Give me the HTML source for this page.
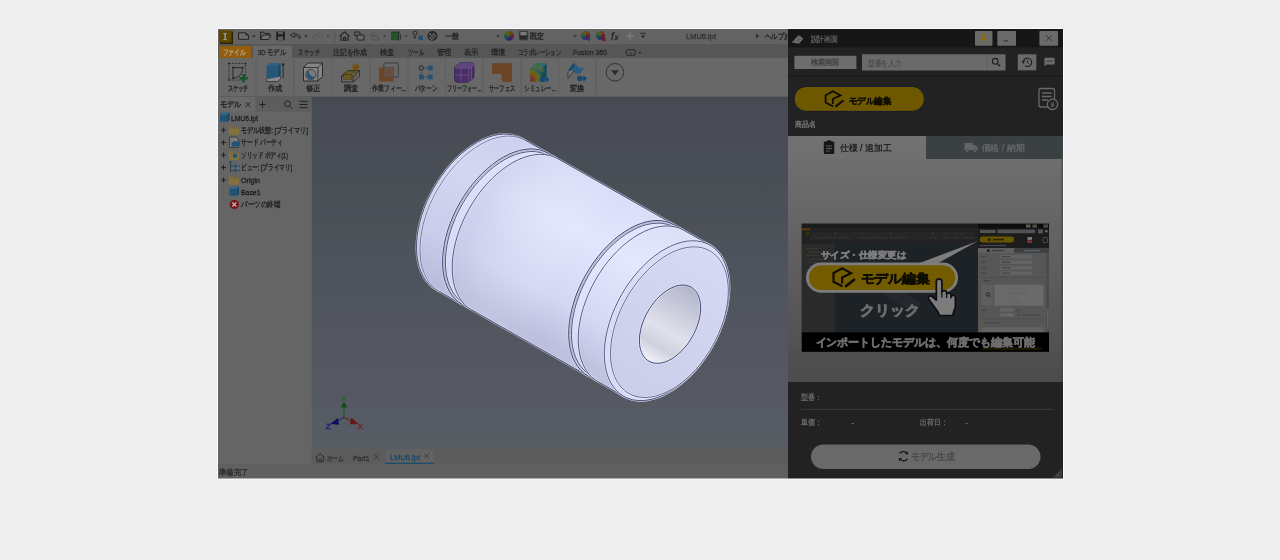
<!DOCTYPE html>
<html lang="ja"><head><meta charset="utf-8"><title>page</title>
<style>
html,body{margin:0;padding:0;background:#eeeeee;}
body{width:1280px;height:560px;overflow:hidden;position:relative;font-family:"Liberation Sans",sans-serif;}
svg{position:absolute;left:0;top:0;}
text{font-family:"Liberation Sans",sans-serif;}
</style></head><body>
<svg width="1280" height="560" viewBox="0 0 1280 560">
<defs>
<linearGradient id="vpg" x1="0" y1="0" x2="0" y2="1"><stop offset="0" stop-color="#464a52"/><stop offset="1" stop-color="#585c65"/></linearGradient>
<linearGradient id="cylg" gradientUnits="userSpaceOnUse" x1="530" y1="135" x2="446" y2="287"><stop offset="0" stop-color="#d8dbf7"/><stop offset="0.35" stop-color="#e3e6fd"/><stop offset="0.75" stop-color="#d4d7f3"/><stop offset="1" stop-color="#bcbfdd"/></linearGradient>
<linearGradient id="boreg" gradientUnits="userSpaceOnUse" x1="691" y1="288" x2="651" y2="360"><stop offset="0" stop-color="#b3b5cb"/><stop offset="0.3" stop-color="#c9cbdc"/><stop offset="0.6" stop-color="#e0e1ea"/><stop offset="0.82" stop-color="#cfd1df"/><stop offset="1" stop-color="#eeeff6"/></linearGradient>
<linearGradient id="faceg" gradientUnits="userSpaceOnUse" x1="710" y1="250" x2="630" y2="395"><stop offset="0" stop-color="#d6d9f4"/><stop offset="1" stop-color="#cbcee9"/></linearGradient>
<linearGradient id="cyla" gradientUnits="userSpaceOnUse" x1="479" y1="214" x2="667" y2="321"><stop offset="0" stop-color="#b8bbdc" stop-opacity="0.35"/><stop offset="0.5" stop-color="#ffffff" stop-opacity="0"/><stop offset="1" stop-color="#ffffff" stop-opacity="0.1"/></linearGradient>
<linearGradient id="rpg" x1="0" y1="0" x2="0" y2="1"><stop offset="0" stop-color="#727272"/><stop offset="1" stop-color="#4c4c4c"/></linearGradient>
<filter id="soft" filterUnits="userSpaceOnUse" x="200" y="10" width="880" height="490"><feGaussianBlur stdDeviation="0.5"/></filter>
<clipPath id="shotclip"><rect x="218" y="29" width="845" height="449.5"/></clipPath>
</defs>
<rect x="217" y="28" width="847" height="451.5" fill="#fafafa"/>
<g clip-path="url(#shotclip)">
<g id="shot" filter="url(#soft)">
<!-- base -->
<rect x="218" y="29" width="845" height="450" fill="#646464"/>
<!-- QAT / title -->
<rect x="218" y="29" width="570" height="15" fill="#636363"/>
<!-- tab row -->
<rect x="218" y="44" width="570" height="14" fill="#575757"/>
<!-- ribbon -->
<rect x="218" y="58" width="570" height="38" fill="#676767"/>
<!-- left panel -->
<rect x="218" y="96" width="93.7" height="368" fill="#656565"/>
<rect x="218" y="96" width="570" height="1" fill="#5c5c5c"/>
<!-- viewport -->
<rect x="311.7" y="97" width="476.3" height="352.3" fill="url(#vpg)"/>
<!-- doc tabs -->
<rect x="311.7" y="449.3" width="476.3" height="14.7" fill="#5b5b5b"/>
<!-- status -->
<rect x="218" y="464" width="570" height="15" fill="#606060"/>

<path d="M436.0 289.6 L432.2 287.1 L428.8 284.0 L425.7 280.4 L423.1 276.3 L420.9 271.7 L419.1 266.6 L417.8 261.2 L416.9 255.4 L416.5 249.3 L416.6 242.9 L417.2 236.3 L418.2 229.5 L419.7 222.6 L421.7 215.6 L424.0 208.7 L426.8 201.7 L430.0 194.9 L433.6 188.2 L437.5 181.7 L441.8 175.5 L446.3 169.5 L451.0 163.9 L456.0 158.7 L461.2 153.8 L466.5 149.5 L471.9 145.6 L477.3 142.3 L482.7 139.5 L488.2 137.2 L493.5 135.6 L498.8 134.5 L503.9 134.1 L508.8 134.3 L513.4 135.0 L517.9 136.4 L522.0 138.4 L709.8 245.0 L713.6 247.6 L717.0 250.7 L720.1 254.3 L722.7 258.4 L724.9 263.0 L726.7 268.1 L728.0 273.5 L728.9 279.3 L729.3 285.4 L729.2 291.8 L728.6 298.4 L727.6 305.2 L726.1 312.1 L724.2 319.0 L721.8 326.0 L719.0 332.9 L715.8 339.8 L712.2 346.5 L708.3 353.0 L704.0 359.2 L699.5 365.2 L694.8 370.8 L689.8 376.0 L684.6 380.8 L679.3 385.2 L674.0 389.1 L668.5 392.4 L663.1 395.2 L657.6 397.4 L652.3 399.1 L647.0 400.1 L642.0 400.6 L637.0 400.4 L632.4 399.7 L628.0 398.3 L623.8 396.3Z" fill="url(#cylg)"/>
<path d="M436.0 289.6 L432.2 287.1 L428.8 284.0 L425.7 280.4 L423.1 276.3 L420.9 271.7 L419.1 266.6 L417.8 261.2 L416.9 255.4 L416.5 249.3 L416.6 242.9 L417.2 236.3 L418.2 229.5 L419.7 222.6 L421.7 215.6 L424.0 208.7 L426.8 201.7 L430.0 194.9 L433.6 188.2 L437.5 181.7 L441.8 175.5 L446.3 169.5 L451.0 163.9 L456.0 158.7 L461.2 153.8 L466.5 149.5 L471.9 145.6 L477.3 142.3 L482.7 139.5 L488.2 137.2 L493.5 135.6 L498.8 134.5 L503.9 134.1 L508.8 134.3 L513.4 135.0 L517.9 136.4 L522.0 138.4 L709.8 245.0 L713.6 247.6 L717.0 250.7 L720.1 254.3 L722.7 258.4 L724.9 263.0 L726.7 268.1 L728.0 273.5 L728.9 279.3 L729.3 285.4 L729.2 291.8 L728.6 298.4 L727.6 305.2 L726.1 312.1 L724.2 319.0 L721.8 326.0 L719.0 332.9 L715.8 339.8 L712.2 346.5 L708.3 353.0 L704.0 359.2 L699.5 365.2 L694.8 370.8 L689.8 376.0 L684.6 380.8 L679.3 385.2 L674.0 389.1 L668.5 392.4 L663.1 395.2 L657.6 397.4 L652.3 399.1 L647.0 400.1 L642.0 400.6 L637.0 400.4 L632.4 399.7 L628.0 398.3 L623.8 396.3Z" fill="url(#cyla)"/>
<path d="M436.0 289.6 L432.2 287.1 L428.8 284.0 L425.7 280.4 L423.1 276.3 L420.9 271.7 L419.1 266.6 L417.8 261.2 L416.9 255.4 L416.5 249.3 L416.6 242.9 L417.2 236.3 L418.2 229.5 L419.7 222.6 L421.7 215.6 L424.0 208.7 L426.8 201.7 L430.0 194.9 L433.6 188.2 L437.5 181.7 L441.8 175.5 L446.3 169.5 L451.0 163.9 L456.0 158.7 L461.2 153.8 L466.5 149.5 L471.9 145.6 L477.3 142.3 L482.7 139.5 L488.2 137.2 L493.5 135.6 L498.8 134.5 L503.9 134.1 L508.8 134.3 L513.4 135.0 L517.9 136.4 L522.0 138.4 L709.8 245.0 L713.6 247.6 L717.0 250.7 L720.1 254.3 L722.7 258.4 L724.9 263.0 L726.7 268.1 L728.0 273.5 L728.9 279.3 L729.3 285.4 L729.2 291.8 L728.6 298.4 L727.6 305.2 L726.1 312.1 L724.2 319.0 L721.8 326.0 L719.0 332.9 L715.8 339.8 L712.2 346.5 L708.3 353.0 L704.0 359.2 L699.5 365.2 L694.8 370.8 L689.8 376.0 L684.6 380.8 L679.3 385.2 L674.0 389.1 L668.5 392.4 L663.1 395.2 L657.6 397.4 L652.3 399.1 L647.0 400.1 L642.0 400.6 L637.0 400.4 L632.4 399.7 L628.0 398.3 L623.8 396.3Z" fill="none" stroke="#f6f7ff" stroke-width="2.1" stroke-opacity="0.55"/><path d="M436.0 289.6 L432.2 287.1 L428.8 284.0 L425.7 280.4 L423.1 276.3 L420.9 271.7 L419.1 266.6 L417.8 261.2 L416.9 255.4 L416.5 249.3 L416.6 242.9 L417.2 236.3 L418.2 229.5 L419.7 222.6 L421.7 215.6 L424.0 208.7 L426.8 201.7 L430.0 194.9 L433.6 188.2 L437.5 181.7 L441.8 175.5 L446.3 169.5 L451.0 163.9 L456.0 158.7 L461.2 153.8 L466.5 149.5 L471.9 145.6 L477.3 142.3 L482.7 139.5 L488.2 137.2 L493.5 135.6 L498.8 134.5 L503.9 134.1 L508.8 134.3 L513.4 135.0 L517.9 136.4 L522.0 138.4 L709.8 245.0 L713.6 247.6 L717.0 250.7 L720.1 254.3 L722.7 258.4 L724.9 263.0 L726.7 268.1 L728.0 273.5 L728.9 279.3 L729.3 285.4 L729.2 291.8 L728.6 298.4 L727.6 305.2 L726.1 312.1 L724.2 319.0 L721.8 326.0 L719.0 332.9 L715.8 339.8 L712.2 346.5 L708.3 353.0 L704.0 359.2 L699.5 365.2 L694.8 370.8 L689.8 376.0 L684.6 380.8 L679.3 385.2 L674.0 389.1 L668.5 392.4 L663.1 395.2 L657.6 397.4 L652.3 399.1 L647.0 400.1 L642.0 400.6 L637.0 400.4 L632.4 399.7 L628.0 398.3 L623.8 396.3Z" fill="none" stroke="#2e3368" stroke-width="0.8"/>
<path d="M439.5 291.6 L435.7 289.1 L432.3 286.0 L429.2 282.4 L426.6 278.2 L424.3 273.6 L422.6 268.6 L421.2 263.2 L420.4 257.4 L420.0 251.2 L420.1 244.8 L420.7 238.2 L421.7 231.5 L423.2 224.6 L425.1 217.6 L427.5 210.6 L430.3 203.7 L433.5 196.9 L437.1 190.2 L441.0 183.7 L445.2 177.4 L449.8 171.5 L454.5 165.9 L459.5 160.6 L464.7 155.8 L469.9 151.5 L475.3 147.6 L480.8 144.3 L486.2 141.5 L491.6 139.2 L497.0 137.6 L502.2 136.5 L507.3 136.1 L512.2 136.2 L516.9 137.0 L521.3 138.4 L525.5 140.3" fill="none" stroke="#f6f7ff" stroke-width="1.9" stroke-opacity="0.55"/><path d="M439.5 291.6 L435.7 289.1 L432.3 286.0 L429.2 282.4 L426.6 278.2 L424.3 273.6 L422.6 268.6 L421.2 263.2 L420.4 257.4 L420.0 251.2 L420.1 244.8 L420.7 238.2 L421.7 231.5 L423.2 224.6 L425.1 217.6 L427.5 210.6 L430.3 203.7 L433.5 196.9 L437.1 190.2 L441.0 183.7 L445.2 177.4 L449.8 171.5 L454.5 165.9 L459.5 160.6 L464.7 155.8 L469.9 151.5 L475.3 147.6 L480.8 144.3 L486.2 141.5 L491.6 139.2 L497.0 137.6 L502.2 136.5 L507.3 136.1 L512.2 136.2 L516.9 137.0 L521.3 138.4 L525.5 140.3" fill="none" stroke="#2e3368" stroke-width="0.6"/>
<path d="M462.1 304.5 L458.3 301.9 L454.9 298.8 L451.8 295.2 L449.2 291.1 L447.0 286.5 L445.2 281.4 L443.9 276.0 L443.0 270.2 L442.6 264.1 L442.7 257.7 L443.3 251.1 L444.3 244.3 L445.8 237.4 L447.7 230.5 L450.1 223.5 L452.9 216.6 L456.1 209.7 L459.7 203.0 L463.6 196.5 L467.8 190.3 L472.4 184.3 L477.1 178.7 L482.1 173.5 L487.3 168.7 L492.6 164.3 L497.9 160.4 L503.4 157.1 L508.8 154.3 L514.3 152.1 L519.6 150.4 L524.8 149.4 L529.9 148.9 L534.8 149.1 L539.5 149.8 L543.9 151.2 L548.1 153.2 L548.5 155.7 L544.4 153.8 L540.1 152.4 L535.6 151.7 L530.8 151.5 L525.8 152.0 L520.7 153.0 L515.4 154.6 L510.1 156.8 L504.8 159.5 L499.5 162.8 L494.2 166.6 L489.1 170.8 L484.0 175.5 L479.2 180.7 L474.5 186.1 L470.1 192.0 L466.0 198.1 L462.1 204.4 L458.6 211.0 L455.5 217.6 L452.8 224.4 L450.4 231.2 L448.5 238.0 L447.1 244.7 L446.1 251.4 L445.5 257.8 L445.4 264.1 L445.8 270.0 L446.6 275.7 L447.9 281.0 L449.7 285.9 L451.9 290.4 L454.4 294.5 L457.4 298.0 L460.8 301.0 L464.5 303.5Z" fill="#a9acc9"/>
<path d="M464.5 303.5 L460.8 301.0 L457.4 298.0 L454.4 294.5 L451.9 290.4 L449.7 285.9 L447.9 281.0 L446.6 275.7 L445.8 270.0 L445.4 264.1 L445.5 257.8 L446.1 251.4 L447.1 244.7 L448.5 238.0 L450.4 231.2 L452.8 224.4 L455.5 217.6 L458.6 211.0 L462.1 204.4 L466.0 198.1 L470.1 192.0 L474.5 186.1 L479.2 180.7 L484.0 175.5 L489.1 170.8 L494.2 166.6 L499.5 162.8 L504.8 159.5 L510.1 156.8 L515.4 154.6 L520.7 153.0 L525.8 152.0 L530.8 151.5 L535.6 151.7 L540.1 152.4 L544.4 153.8 L548.5 155.7 L557.6 158.6 L553.5 156.6 L549.1 155.3 L544.4 154.5 L539.5 154.3 L534.4 154.8 L529.2 155.8 L523.8 157.5 L518.4 159.7 L512.9 162.5 L507.5 165.9 L502.1 169.7 L496.8 174.1 L491.7 178.9 L486.7 184.2 L481.9 189.8 L477.4 195.7 L473.2 202.0 L469.3 208.5 L465.7 215.2 L462.5 222.0 L459.7 228.9 L457.3 235.9 L455.4 242.9 L453.9 249.7 L452.8 256.5 L452.3 263.1 L452.2 269.5 L452.6 275.6 L453.4 281.4 L454.7 286.9 L456.5 291.9 L458.7 296.5 L461.4 300.6 L464.4 304.3 L467.9 307.4 L471.7 309.9Z" fill="#e3e6fd" fill-opacity="0.6"/>
<path d="M462.1 304.5 L458.3 301.9 L454.9 298.8 L451.8 295.2 L449.2 291.1 L447.0 286.5 L445.2 281.4 L443.9 276.0 L443.0 270.2 L442.6 264.1 L442.7 257.7 L443.3 251.1 L444.3 244.3 L445.8 237.4 L447.7 230.5 L450.1 223.5 L452.9 216.6 L456.1 209.7 L459.7 203.0 L463.6 196.5 L467.8 190.3 L472.4 184.3 L477.1 178.7 L482.1 173.5 L487.3 168.7 L492.6 164.3 L497.9 160.4 L503.4 157.1 L508.8 154.3 L514.3 152.1 L519.6 150.4 L524.8 149.4 L529.9 148.9 L534.8 149.1 L539.5 149.8 L543.9 151.2 L548.1 153.2" fill="none" stroke="#f6f7ff" stroke-width="2.2" stroke-opacity="0.55"/><path d="M462.1 304.5 L458.3 301.9 L454.9 298.8 L451.8 295.2 L449.2 291.1 L447.0 286.5 L445.2 281.4 L443.9 276.0 L443.0 270.2 L442.6 264.1 L442.7 257.7 L443.3 251.1 L444.3 244.3 L445.8 237.4 L447.7 230.5 L450.1 223.5 L452.9 216.6 L456.1 209.7 L459.7 203.0 L463.6 196.5 L467.8 190.3 L472.4 184.3 L477.1 178.7 L482.1 173.5 L487.3 168.7 L492.6 164.3 L497.9 160.4 L503.4 157.1 L508.8 154.3 L514.3 152.1 L519.6 150.4 L524.8 149.4 L529.9 148.9 L534.8 149.1 L539.5 149.8 L543.9 151.2 L548.1 153.2" fill="none" stroke="#2e3368" stroke-width="0.9"/>
<path d="M464.5 303.5 L460.8 301.0 L457.4 298.0 L454.4 294.5 L451.9 290.4 L449.7 285.9 L447.9 281.0 L446.6 275.7 L445.8 270.0 L445.4 264.1 L445.5 257.8 L446.1 251.4 L447.1 244.7 L448.5 238.0 L450.4 231.2 L452.8 224.4 L455.5 217.6 L458.6 211.0 L462.1 204.4 L466.0 198.1 L470.1 192.0 L474.5 186.1 L479.2 180.7 L484.0 175.5 L489.1 170.8 L494.2 166.6 L499.5 162.8 L504.8 159.5 L510.1 156.8 L515.4 154.6 L520.7 153.0 L525.8 152.0 L530.8 151.5 L535.6 151.7 L540.1 152.4 L544.4 153.8 L548.5 155.7" fill="none" stroke="#f6f7ff" stroke-width="2.1" stroke-opacity="0.55"/><path d="M464.5 303.5 L460.8 301.0 L457.4 298.0 L454.4 294.5 L451.9 290.4 L449.7 285.9 L447.9 281.0 L446.6 275.7 L445.8 270.0 L445.4 264.1 L445.5 257.8 L446.1 251.4 L447.1 244.7 L448.5 238.0 L450.4 231.2 L452.8 224.4 L455.5 217.6 L458.6 211.0 L462.1 204.4 L466.0 198.1 L470.1 192.0 L474.5 186.1 L479.2 180.7 L484.0 175.5 L489.1 170.8 L494.2 166.6 L499.5 162.8 L504.8 159.5 L510.1 156.8 L515.4 154.6 L520.7 153.0 L525.8 152.0 L530.8 151.5 L535.6 151.7 L540.1 152.4 L544.4 153.8 L548.5 155.7" fill="none" stroke="#2e3368" stroke-width="0.8"/>
<path d="M471.7 309.9 L467.9 307.4 L464.4 304.3 L461.4 300.6 L458.7 296.5 L456.5 291.9 L454.7 286.9 L453.4 281.4 L452.6 275.6 L452.2 269.5 L452.3 263.1 L452.8 256.5 L453.9 249.7 L455.4 242.9 L457.3 235.9 L459.7 228.9 L462.5 222.0 L465.7 215.2 L469.3 208.5 L473.2 202.0 L477.4 195.7 L481.9 189.8 L486.7 184.2 L491.7 178.9 L496.8 174.1 L502.1 169.7 L507.5 165.9 L512.9 162.5 L518.4 159.7 L523.8 157.5 L529.2 155.8 L534.4 154.8 L539.5 154.3 L544.4 154.5 L549.1 155.3 L553.5 156.6 L557.6 158.6" fill="none" stroke="#f6f7ff" stroke-width="2.1" stroke-opacity="0.55"/><path d="M471.7 309.9 L467.9 307.4 L464.4 304.3 L461.4 300.6 L458.7 296.5 L456.5 291.9 L454.7 286.9 L453.4 281.4 L452.6 275.6 L452.2 269.5 L452.3 263.1 L452.8 256.5 L453.9 249.7 L455.4 242.9 L457.3 235.9 L459.7 228.9 L462.5 222.0 L465.7 215.2 L469.3 208.5 L473.2 202.0 L477.4 195.7 L481.9 189.8 L486.7 184.2 L491.7 178.9 L496.8 174.1 L502.1 169.7 L507.5 165.9 L512.9 162.5 L518.4 159.7 L523.8 157.5 L529.2 155.8 L534.4 154.8 L539.5 154.3 L544.4 154.5 L549.1 155.3 L553.5 156.6 L557.6 158.6" fill="none" stroke="#2e3368" stroke-width="0.8"/>
<path d="M588.2 376.1 L584.4 373.6 L581.0 370.5 L577.9 366.8 L575.3 362.7 L573.0 358.1 L571.3 353.1 L569.9 347.6 L569.1 341.8 L568.7 335.7 L568.8 329.3 L569.3 322.7 L570.4 315.9 L571.9 309.0 L573.8 302.1 L576.2 295.1 L579.0 288.2 L582.2 281.3 L585.8 274.7 L589.7 268.2 L593.9 261.9 L598.4 256.0 L603.2 250.3 L608.2 245.1 L613.3 240.3 L618.6 235.9 L624.0 232.1 L629.5 228.7 L634.9 225.9 L640.3 223.7 L645.7 222.0 L650.9 221.0 L656.0 220.5 L660.9 220.7 L665.6 221.5 L670.0 222.8 L674.1 224.8 L674.5 227.3 L670.5 225.4 L666.2 224.1 L661.6 223.3 L656.8 223.2 L651.9 223.6 L646.7 224.6 L641.5 226.2 L636.2 228.4 L630.9 231.2 L625.6 234.4 L620.3 238.2 L615.1 242.5 L610.1 247.2 L605.2 252.3 L600.6 257.8 L596.2 263.6 L592.0 269.7 L588.2 276.0 L584.7 282.6 L581.6 289.3 L578.9 296.0 L576.5 302.8 L574.6 309.6 L573.2 316.4 L572.1 323.0 L571.6 329.4 L571.5 335.7 L571.9 341.7 L572.7 347.3 L574.0 352.6 L575.8 357.6 L577.9 362.1 L580.5 366.1 L583.5 369.6 L586.9 372.7 L590.6 375.1Z" fill="#a9acc9"/>
<path d="M590.6 375.1 L586.9 372.7 L583.5 369.6 L580.5 366.1 L577.9 362.1 L575.8 357.6 L574.0 352.6 L572.7 347.3 L571.9 341.7 L571.5 335.7 L571.6 329.4 L572.1 323.0 L573.2 316.4 L574.6 309.6 L576.5 302.8 L578.9 296.0 L581.6 289.3 L584.7 282.6 L588.2 276.0 L592.0 269.7 L596.2 263.6 L600.6 257.8 L605.2 252.3 L610.1 247.2 L615.1 242.5 L620.3 238.2 L625.6 234.4 L630.9 231.2 L636.2 228.4 L641.5 226.2 L646.7 224.6 L651.9 223.6 L656.8 223.2 L661.6 223.3 L666.2 224.1 L670.5 225.4 L674.5 227.3 L683.7 230.2 L679.6 228.3 L675.2 226.9 L670.5 226.1 L665.6 226.0 L660.5 226.4 L655.2 227.5 L649.9 229.1 L644.5 231.4 L639.0 234.2 L633.6 237.5 L628.2 241.4 L622.9 245.7 L617.8 250.5 L612.8 255.8 L608.0 261.4 L603.5 267.3 L599.3 273.6 L595.3 280.1 L591.8 286.8 L588.6 293.6 L585.8 300.5 L583.4 307.5 L581.4 314.5 L579.9 321.4 L578.9 328.1 L578.3 334.7 L578.2 341.1 L578.6 347.2 L579.5 353.0 L580.8 358.5 L582.6 363.5 L584.8 368.1 L587.5 372.3 L590.5 375.9 L594.0 379.0 L597.8 381.5Z" fill="#e3e6fd" fill-opacity="0.6"/>
<path d="M588.2 376.1 L584.4 373.6 L581.0 370.5 L577.9 366.8 L575.3 362.7 L573.0 358.1 L571.3 353.1 L569.9 347.6 L569.1 341.8 L568.7 335.7 L568.8 329.3 L569.3 322.7 L570.4 315.9 L571.9 309.0 L573.8 302.1 L576.2 295.1 L579.0 288.2 L582.2 281.3 L585.8 274.7 L589.7 268.2 L593.9 261.9 L598.4 256.0 L603.2 250.3 L608.2 245.1 L613.3 240.3 L618.6 235.9 L624.0 232.1 L629.5 228.7 L634.9 225.9 L640.3 223.7 L645.7 222.0 L650.9 221.0 L656.0 220.5 L660.9 220.7 L665.6 221.5 L670.0 222.8 L674.1 224.8" fill="none" stroke="#f6f7ff" stroke-width="2.2" stroke-opacity="0.55"/><path d="M588.2 376.1 L584.4 373.6 L581.0 370.5 L577.9 366.8 L575.3 362.7 L573.0 358.1 L571.3 353.1 L569.9 347.6 L569.1 341.8 L568.7 335.7 L568.8 329.3 L569.3 322.7 L570.4 315.9 L571.9 309.0 L573.8 302.1 L576.2 295.1 L579.0 288.2 L582.2 281.3 L585.8 274.7 L589.7 268.2 L593.9 261.9 L598.4 256.0 L603.2 250.3 L608.2 245.1 L613.3 240.3 L618.6 235.9 L624.0 232.1 L629.5 228.7 L634.9 225.9 L640.3 223.7 L645.7 222.0 L650.9 221.0 L656.0 220.5 L660.9 220.7 L665.6 221.5 L670.0 222.8 L674.1 224.8" fill="none" stroke="#2e3368" stroke-width="0.9"/>
<path d="M590.6 375.1 L586.9 372.7 L583.5 369.6 L580.5 366.1 L577.9 362.1 L575.8 357.6 L574.0 352.6 L572.7 347.3 L571.9 341.7 L571.5 335.7 L571.6 329.4 L572.1 323.0 L573.2 316.4 L574.6 309.6 L576.5 302.8 L578.9 296.0 L581.6 289.3 L584.7 282.6 L588.2 276.0 L592.0 269.7 L596.2 263.6 L600.6 257.8 L605.2 252.3 L610.1 247.2 L615.1 242.5 L620.3 238.2 L625.6 234.4 L630.9 231.2 L636.2 228.4 L641.5 226.2 L646.7 224.6 L651.9 223.6 L656.8 223.2 L661.6 223.3 L666.2 224.1 L670.5 225.4 L674.5 227.3" fill="none" stroke="#f6f7ff" stroke-width="2.1" stroke-opacity="0.55"/><path d="M590.6 375.1 L586.9 372.7 L583.5 369.6 L580.5 366.1 L577.9 362.1 L575.8 357.6 L574.0 352.6 L572.7 347.3 L571.9 341.7 L571.5 335.7 L571.6 329.4 L572.1 323.0 L573.2 316.4 L574.6 309.6 L576.5 302.8 L578.9 296.0 L581.6 289.3 L584.7 282.6 L588.2 276.0 L592.0 269.7 L596.2 263.6 L600.6 257.8 L605.2 252.3 L610.1 247.2 L615.1 242.5 L620.3 238.2 L625.6 234.4 L630.9 231.2 L636.2 228.4 L641.5 226.2 L646.7 224.6 L651.9 223.6 L656.8 223.2 L661.6 223.3 L666.2 224.1 L670.5 225.4 L674.5 227.3" fill="none" stroke="#2e3368" stroke-width="0.8"/>
<path d="M597.8 381.5 L594.0 379.0 L590.5 375.9 L587.5 372.3 L584.8 368.1 L582.6 363.5 L580.8 358.5 L579.5 353.0 L578.6 347.2 L578.2 341.1 L578.3 334.7 L578.9 328.1 L579.9 321.4 L581.4 314.5 L583.4 307.5 L585.8 300.5 L588.6 293.6 L591.8 286.8 L595.3 280.1 L599.3 273.6 L603.5 267.3 L608.0 261.4 L612.8 255.8 L617.8 250.5 L622.9 245.7 L628.2 241.4 L633.6 237.5 L639.0 234.2 L644.5 231.4 L649.9 229.1 L655.2 227.5 L660.5 226.4 L665.6 226.0 L670.5 226.1 L675.2 226.9 L679.6 228.3 L683.7 230.2" fill="none" stroke="#f6f7ff" stroke-width="2.1" stroke-opacity="0.55"/><path d="M597.8 381.5 L594.0 379.0 L590.5 375.9 L587.5 372.3 L584.8 368.1 L582.6 363.5 L580.8 358.5 L579.5 353.0 L578.6 347.2 L578.2 341.1 L578.3 334.7 L578.9 328.1 L579.9 321.4 L581.4 314.5 L583.4 307.5 L585.8 300.5 L588.6 293.6 L591.8 286.8 L595.3 280.1 L599.3 273.6 L603.5 267.3 L608.0 261.4 L612.8 255.8 L617.8 250.5 L622.9 245.7 L628.2 241.4 L633.6 237.5 L639.0 234.2 L644.5 231.4 L649.9 229.1 L655.2 227.5 L660.5 226.4 L665.6 226.0 L670.5 226.1 L675.2 226.9 L679.6 228.3 L683.7 230.2" fill="none" stroke="#2e3368" stroke-width="0.8"/>
<path d="M712.2 346.5 L708.3 353.0 L704.0 359.2 L699.5 365.2 L694.8 370.8 L689.8 376.0 L684.6 380.8 L679.3 385.2 L674.0 389.1 L668.5 392.4 L663.1 395.2 L657.6 397.4 L652.3 399.1 L647.0 400.1 L642.0 400.6 L637.0 400.4 L632.4 399.7 L628.0 398.3 L623.8 396.3 L620.0 393.8 L616.6 390.7 L613.6 387.1 L610.9 383.0 L608.7 378.4 L606.9 373.3 L605.6 367.9 L604.7 362.1 L604.3 355.9 L604.4 349.6 L605.0 343.0 L606.0 336.2 L607.5 329.3 L609.5 322.3 L611.8 315.4 L614.7 308.4 L617.9 301.6 L621.4 294.9 L625.3 288.4 L629.6 282.2 L634.1 276.2 L638.9 270.6 L643.8 265.4 L649.0 260.5 L654.3 256.2 L659.7 252.3 L665.1 249.0 L670.6 246.2 L676.0 243.9 L681.3 242.3 L686.6 241.2 L691.7 240.8 L696.6 240.9 L701.2 241.7 L705.7 243.1 L709.8 245.0 L713.6 247.6 L717.0 250.7 L720.1 254.3 L722.7 258.4 L724.9 263.0 L726.7 268.1 L728.0 273.5 L728.9 279.3 L729.3 285.4 L729.2 291.8 L728.6 298.4 L727.6 305.2 L726.1 312.1 L724.2 319.0 L721.8 326.0 L719.0 332.9 L715.8 339.8 L712.2 346.5Z" fill="#d9dcf7"/>
<path d="M712.2 346.5 L708.3 353.0 L704.0 359.2 L699.5 365.2 L694.8 370.8 L689.8 376.0 L684.6 380.8 L679.3 385.2 L674.0 389.1 L668.5 392.4 L663.1 395.2 L657.6 397.4 L652.3 399.1 L647.0 400.1 L642.0 400.6 L637.0 400.4 L632.4 399.7 L628.0 398.3 L623.8 396.3 L620.0 393.8 L616.6 390.7 L613.6 387.1 L610.9 383.0 L608.7 378.4 L606.9 373.3 L605.6 367.9 L604.7 362.1 L604.3 355.9 L604.4 349.6 L605.0 343.0 L606.0 336.2 L607.5 329.3 L609.5 322.3 L611.8 315.4 L614.7 308.4 L617.9 301.6 L621.4 294.9 L625.3 288.4 L629.6 282.2 L634.1 276.2 L638.9 270.6 L643.8 265.4 L649.0 260.5 L654.3 256.2 L659.7 252.3 L665.1 249.0 L670.6 246.2 L676.0 243.9 L681.3 242.3 L686.6 241.2 L691.7 240.8 L696.6 240.9 L701.2 241.7 L705.7 243.1 L709.8 245.0 L713.6 247.6 L717.0 250.7 L720.1 254.3 L722.7 258.4 L724.9 263.0 L726.7 268.1 L728.0 273.5 L728.9 279.3 L729.3 285.4 L729.2 291.8 L728.6 298.4 L727.6 305.2 L726.1 312.1 L724.2 319.0 L721.8 326.0 L719.0 332.9 L715.8 339.8 L712.2 346.5Z" fill="none" stroke="#f6f7ff" stroke-width="2.1" stroke-opacity="0.55"/><path d="M712.2 346.5 L708.3 353.0 L704.0 359.2 L699.5 365.2 L694.8 370.8 L689.8 376.0 L684.6 380.8 L679.3 385.2 L674.0 389.1 L668.5 392.4 L663.1 395.2 L657.6 397.4 L652.3 399.1 L647.0 400.1 L642.0 400.6 L637.0 400.4 L632.4 399.7 L628.0 398.3 L623.8 396.3 L620.0 393.8 L616.6 390.7 L613.6 387.1 L610.9 383.0 L608.7 378.4 L606.9 373.3 L605.6 367.9 L604.7 362.1 L604.3 355.9 L604.4 349.6 L605.0 343.0 L606.0 336.2 L607.5 329.3 L609.5 322.3 L611.8 315.4 L614.7 308.4 L617.9 301.6 L621.4 294.9 L625.3 288.4 L629.6 282.2 L634.1 276.2 L638.9 270.6 L643.8 265.4 L649.0 260.5 L654.3 256.2 L659.7 252.3 L665.1 249.0 L670.6 246.2 L676.0 243.9 L681.3 242.3 L686.6 241.2 L691.7 240.8 L696.6 240.9 L701.2 241.7 L705.7 243.1 L709.8 245.0 L713.6 247.6 L717.0 250.7 L720.1 254.3 L722.7 258.4 L724.9 263.0 L726.7 268.1 L728.0 273.5 L728.9 279.3 L729.3 285.4 L729.2 291.8 L728.6 298.4 L727.6 305.2 L726.1 312.1 L724.2 319.0 L721.8 326.0 L719.0 332.9 L715.8 339.8 L712.2 346.5Z" fill="none" stroke="#2e3368" stroke-width="0.8"/>
<path d="M712.2 346.5 L708.5 352.6 L704.5 358.5 L700.3 364.1 L695.8 369.4 L691.1 374.3 L686.2 378.9 L681.2 383.0 L676.2 386.6 L671.0 389.8 L665.9 392.4 L660.8 394.5 L655.7 396.1 L650.8 397.1 L646.0 397.5 L641.4 397.3 L637.0 396.6 L632.8 395.3 L628.9 393.5 L625.3 391.1 L622.1 388.2 L619.2 384.8 L616.7 380.9 L614.6 376.5 L613.0 371.8 L611.7 366.6 L610.9 361.2 L610.5 355.4 L610.6 349.4 L611.1 343.2 L612.1 336.8 L613.5 330.3 L615.4 323.7 L617.6 317.2 L620.3 310.6 L623.3 304.2 L626.6 297.9 L630.3 291.7 L634.3 285.9 L638.6 280.2 L643.1 275.0 L647.8 270.0 L652.6 265.5 L657.6 261.4 L662.7 257.7 L667.8 254.6 L672.9 251.9 L678.1 249.8 L683.1 248.3 L688.0 247.3 L692.8 246.9 L697.5 247.0 L701.9 247.7 L706.0 249.0 L709.9 250.9 L713.5 253.3 L716.7 256.2 L719.6 259.6 L722.1 263.5 L724.2 267.8 L725.9 272.6 L727.1 277.7 L727.9 283.2 L728.3 288.9 L728.2 295.0 L727.7 301.2 L726.7 307.6 L725.3 314.1 L723.5 320.6 L721.2 327.2 L718.6 333.7 L715.6 340.2 L712.2 346.5Z" fill="url(#faceg)"/>
<path d="M712.2 346.5 L708.5 352.6 L704.5 358.5 L700.3 364.1 L695.8 369.4 L691.1 374.3 L686.2 378.9 L681.2 383.0 L676.2 386.6 L671.0 389.8 L665.9 392.4 L660.8 394.5 L655.7 396.1 L650.8 397.1 L646.0 397.5 L641.4 397.3 L637.0 396.6 L632.8 395.3 L628.9 393.5 L625.3 391.1 L622.1 388.2 L619.2 384.8 L616.7 380.9 L614.6 376.5 L613.0 371.8 L611.7 366.6 L610.9 361.2 L610.5 355.4 L610.6 349.4 L611.1 343.2 L612.1 336.8 L613.5 330.3 L615.4 323.7 L617.6 317.2 L620.3 310.6 L623.3 304.2 L626.6 297.9 L630.3 291.7 L634.3 285.9 L638.6 280.2 L643.1 275.0 L647.8 270.0 L652.6 265.5 L657.6 261.4 L662.7 257.7 L667.8 254.6 L672.9 251.9 L678.1 249.8 L683.1 248.3 L688.0 247.3 L692.8 246.9 L697.5 247.0 L701.9 247.7 L706.0 249.0 L709.9 250.9 L713.5 253.3 L716.7 256.2 L719.6 259.6 L722.1 263.5 L724.2 267.8 L725.9 272.6 L727.1 277.7 L727.9 283.2 L728.3 288.9 L728.2 295.0 L727.7 301.2 L726.7 307.6 L725.3 314.1 L723.5 320.6 L721.2 327.2 L718.6 333.7 L715.6 340.2 L712.2 346.5Z" fill="none" stroke="#f6f7ff" stroke-width="2.0" stroke-opacity="0.55"/><path d="M712.2 346.5 L708.5 352.6 L704.5 358.5 L700.3 364.1 L695.8 369.4 L691.1 374.3 L686.2 378.9 L681.2 383.0 L676.2 386.6 L671.0 389.8 L665.9 392.4 L660.8 394.5 L655.7 396.1 L650.8 397.1 L646.0 397.5 L641.4 397.3 L637.0 396.6 L632.8 395.3 L628.9 393.5 L625.3 391.1 L622.1 388.2 L619.2 384.8 L616.7 380.9 L614.6 376.5 L613.0 371.8 L611.7 366.6 L610.9 361.2 L610.5 355.4 L610.6 349.4 L611.1 343.2 L612.1 336.8 L613.5 330.3 L615.4 323.7 L617.6 317.2 L620.3 310.6 L623.3 304.2 L626.6 297.9 L630.3 291.7 L634.3 285.9 L638.6 280.2 L643.1 275.0 L647.8 270.0 L652.6 265.5 L657.6 261.4 L662.7 257.7 L667.8 254.6 L672.9 251.9 L678.1 249.8 L683.1 248.3 L688.0 247.3 L692.8 246.9 L697.5 247.0 L701.9 247.7 L706.0 249.0 L709.9 250.9 L713.5 253.3 L716.7 256.2 L719.6 259.6 L722.1 263.5 L724.2 267.8 L725.9 272.6 L727.1 277.7 L727.9 283.2 L728.3 288.9 L728.2 295.0 L727.7 301.2 L726.7 307.6 L725.3 314.1 L723.5 320.6 L721.2 327.2 L718.6 333.7 L715.6 340.2 L712.2 346.5Z" fill="none" stroke="#2e3368" stroke-width="0.7"/>
<path d="M692.2 336.8 L690.3 340.0 L688.3 343.0 L686.0 346.0 L683.7 348.7 L681.3 351.3 L678.7 353.6 L676.2 355.8 L673.5 357.7 L670.9 359.3 L668.2 360.7 L665.5 361.8 L662.9 362.6 L660.3 363.1 L657.8 363.3 L655.4 363.2 L653.2 362.8 L651.0 362.2 L649.0 361.2 L647.1 360.0 L645.4 358.5 L643.9 356.7 L642.6 354.7 L641.6 352.4 L640.7 349.9 L640.0 347.3 L639.6 344.4 L639.4 341.4 L639.5 338.3 L639.7 335.1 L640.3 331.8 L641.0 328.4 L641.9 325.0 L643.1 321.6 L644.5 318.2 L646.0 314.8 L647.8 311.5 L649.7 308.4 L651.8 305.3 L654.0 302.4 L656.3 299.6 L658.8 297.1 L661.3 294.7 L663.9 292.6 L666.5 290.7 L669.2 289.1 L671.9 287.7 L674.5 286.6 L677.1 285.8 L679.7 285.3 L682.2 285.0 L684.6 285.1 L686.9 285.5 L689.0 286.2 L691.1 287.1 L692.9 288.4 L694.6 289.9 L696.1 291.7 L697.4 293.7 L698.5 295.9 L699.4 298.4 L700.0 301.1 L700.4 303.9 L700.6 306.9 L700.6 310.0 L700.3 313.3 L699.8 316.6 L699.1 320.0 L698.1 323.4 L696.9 326.8 L695.6 330.2 L694.0 333.5 L692.2 336.8Z" fill="url(#boreg)"/>
<path d="M692.2 336.8 L690.3 340.0 L688.3 343.0 L686.0 346.0 L683.7 348.7 L681.3 351.3 L678.7 353.6 L676.2 355.8 L673.5 357.7 L670.9 359.3 L668.2 360.7 L665.5 361.8 L662.9 362.6 L660.3 363.1 L657.8 363.3 L655.4 363.2 L653.2 362.8 L651.0 362.2 L649.0 361.2 L647.1 360.0 L645.4 358.5 L643.9 356.7 L642.6 354.7 L641.6 352.4 L640.7 349.9 L640.0 347.3 L639.6 344.4 L639.4 341.4 L639.5 338.3 L639.7 335.1 L640.3 331.8 L641.0 328.4 L641.9 325.0 L643.1 321.6 L644.5 318.2 L646.0 314.8 L647.8 311.5 L649.7 308.4 L651.8 305.3 L654.0 302.4 L656.3 299.6 L658.8 297.1 L661.3 294.7 L663.9 292.6 L666.5 290.7 L669.2 289.1 L671.9 287.7 L674.5 286.6 L677.1 285.8 L679.7 285.3 L682.2 285.0 L684.6 285.1 L686.9 285.5 L689.0 286.2 L691.1 287.1 L692.9 288.4 L694.6 289.9 L696.1 291.7 L697.4 293.7 L698.5 295.9 L699.4 298.4 L700.0 301.1 L700.4 303.9 L700.6 306.9 L700.6 310.0 L700.3 313.3 L699.8 316.6 L699.1 320.0 L698.1 323.4 L696.9 326.8 L695.6 330.2 L694.0 333.5 L692.2 336.8Z" fill="none" stroke="#f6f7ff" stroke-width="2.2" stroke-opacity="0.55"/><path d="M692.2 336.8 L690.3 340.0 L688.3 343.0 L686.0 346.0 L683.7 348.7 L681.3 351.3 L678.7 353.6 L676.2 355.8 L673.5 357.7 L670.9 359.3 L668.2 360.7 L665.5 361.8 L662.9 362.6 L660.3 363.1 L657.8 363.3 L655.4 363.2 L653.2 362.8 L651.0 362.2 L649.0 361.2 L647.1 360.0 L645.4 358.5 L643.9 356.7 L642.6 354.7 L641.6 352.4 L640.7 349.9 L640.0 347.3 L639.6 344.4 L639.4 341.4 L639.5 338.3 L639.7 335.1 L640.3 331.8 L641.0 328.4 L641.9 325.0 L643.1 321.6 L644.5 318.2 L646.0 314.8 L647.8 311.5 L649.7 308.4 L651.8 305.3 L654.0 302.4 L656.3 299.6 L658.8 297.1 L661.3 294.7 L663.9 292.6 L666.5 290.7 L669.2 289.1 L671.9 287.7 L674.5 286.6 L677.1 285.8 L679.7 285.3 L682.2 285.0 L684.6 285.1 L686.9 285.5 L689.0 286.2 L691.1 287.1 L692.9 288.4 L694.6 289.9 L696.1 291.7 L697.4 293.7 L698.5 295.9 L699.4 298.4 L700.0 301.1 L700.4 303.9 L700.6 306.9 L700.6 310.0 L700.3 313.3 L699.8 316.6 L699.1 320.0 L698.1 323.4 L696.9 326.8 L695.6 330.2 L694.0 333.5 L692.2 336.8Z" fill="none" stroke="#2e3368" stroke-width="0.9"/>
<rect x="220" y="31.5" width="13" height="12.5" fill="#2c2303"/>
<rect x="219" y="30.3" width="12.5" height="12.2" fill="#5f4a02"/>
<path d="M223.3 33h3.6v1.1h-1v4.9h1v1.1h-3.6v-1.1h1v-4.9h-1z" fill="#969696"/>
<path d="M238.6 32.8h7l3 2.6v3.9h-10z" fill="#6c6c6c" stroke="#222222" stroke-width="1" stroke-linejoin="round"/>
<path d="M245.6 32.8l3 2.6h-3z" fill="#222222"/>
<path d="M252.2 35.5 h3.6 l-1.8 2.0 z" fill="#2a2a2a"/>
<path d="M260.5 39.5v-7.3h3.4l1 1.2h4.4v1.6" fill="none" stroke="#222222" stroke-width="1"/>
<path d="M260.5 39.5l2.2-4.5h8.2l-2.2 4.5z" fill="#707070" stroke="#222222" stroke-width="1" stroke-linejoin="round"/>
<rect x="276.2" y="31.6" width="8.8" height="8.6" rx="0.8" fill="#222"/>
<rect x="278" y="31.6" width="5" height="2.6" fill="#5a5a5a"/>
<rect x="278" y="36.6" width="5.2" height="3.6" fill="#5f5f5f"/>
<path d="M290.4 35.3l3.7-2.6v1.5h2.5c2.4 0 3.7 1.6 3.7 3.9h-1.6c0-1.4-.8-2.2-2.2-2.2h-2.4v1.7z" fill="#6a6a6a" stroke="#222222" stroke-width="0.9" stroke-linejoin="round"/>
<path d="M304.2 35.5 h3.6 l-1.8 2.0 z" fill="#2a2a2a"/>
<path d="M322.6 35.3l-3.7-2.6v1.5h-2.5c-2.4 0-3.7 1.6-3.7 3.9h1.6c0-1.4.8-2.2 2.2-2.2h2.4v1.7z" fill="#6a6a6a" stroke="#525252" stroke-width="0.9" stroke-linejoin="round"/>
<path d="M326.5 35.6 h3.0 l-1.5 1.7 z" fill="#3a3a3a"/>
<rect x="334.3" y="30" width="0.8" height="13" fill="#585858"/>
<path d="M339.5 36.2l5-4.3 5 4.3M341 35.5v4.7h7v-4.7M343.6 40.2v-2.8h1.9v2.8" fill="none" stroke="#222222" stroke-width="1.1" stroke-linejoin="round"/>
<rect x="354.5" y="32" width="5.5" height="3.6" rx="0.6" fill="none" stroke="#222222" stroke-width="1"/>
<rect x="357" y="35" width="7" height="5" rx="0.6" fill="#6a6a6a" stroke="#222222" stroke-width="1"/>
<path d="M370.5 35.5l5-3.5M372 36l3.5-1h2M371 38c2-2.5 6-2.5 8 0v2h-6.5z" fill="none" stroke="#505050" stroke-width="1"/>
<path d="M383.0 35.6 h3.0 l-1.5 1.7 z" fill="#333"/>
<rect x="391" y="31.5" width="9" height="2.2" fill="#224426"/>
<rect x="391" y="33.7" width="7" height="6.5" fill="#23532a"/>
<path d="M398.5 33.5v6.7M400.3 34v5.5l-1 .9" fill="none" stroke="#222222" stroke-width="0.9"/>
<path d="M404.5 35.6 h3.0 l-1.5 1.7 z" fill="#2a2a2a"/>
<circle cx="415" cy="33.2" r="2" fill="none" stroke="#222222" stroke-width="0.9"/>
<path d="M415 35.2v3.2M413.2 37.6h3" stroke="#222222" stroke-width="0.9" fill="none"/>
<rect x="418.4" y="35.6" width="4.6" height="4.6" rx="0.8" fill="#225070"/>
<circle cx="432.4" cy="36" r="5" fill="#2a2a2a"/>
<path d="M429.2 33.2h1.8v1.8h-1.8zM432.6 33.2h1.8v1.8h-1.8zM430.9 35h1.8v1.8h-1.8zM434.2 35h1.6v1.8h-1.6zM429.2 36.8h1.8v1.8h-1.8zM432.6 36.8h1.8v1.8h-1.8zM430.9 38.6h1.8v1.6h-1.8z" fill="#6a6a6a"/>
<text x="445" y="39" font-size="7.5" fill="#222222" stroke="#222222" stroke-width="0.3" font-weight="normal" text-anchor="start" textLength="14" lengthAdjust="spacingAndGlyphs" >一般</text>
<path d="M496.2 35.5 h3.6 l-1.8 2.0 z" fill="#2a2a2a"/>
<path d="M509.0 36.0 L509.00 31.00 A5 5 0 0 1 513.33 33.50 Z" fill="#684412"/><path d="M509.0 36.0 L513.33 33.50 A5 5 0 0 1 513.33 38.50 Z" fill="#682424"/><path d="M509.0 36.0 L513.33 38.50 A5 5 0 0 1 509.00 41.00 Z" fill="#441f61"/><path d="M509.0 36.0 L509.00 41.00 A5 5 0 0 1 504.67 38.50 Z" fill="#1f386d"/><path d="M509.0 36.0 L504.67 38.50 A5 5 0 0 1 504.67 33.50 Z" fill="#1f5c38"/><path d="M509.0 36.0 L504.67 33.50 A5 5 0 0 1 509.00 31.00 Z" fill="#5c5c18"/>
<rect x="519.3" y="31.3" width="8.4" height="8.6" rx="1.2" fill="#4a4a4a" stroke="#2f2f2f" stroke-width="0.8"/>
<rect x="520" y="35.8" width="7" height="3.4" fill="#2a2a2a"/>
<rect x="520.6" y="32" width="5.8" height="3" fill="#7a7a7a"/>
<text x="530" y="39" font-size="7.5" fill="#222222" stroke="#222222" stroke-width="0.3" font-weight="normal" text-anchor="start" textLength="14" lengthAdjust="spacingAndGlyphs" >既定</text>
<path d="M573.2 35.5 h3.6 l-1.8 2.0 z" fill="#2a2a2a"/>
<path d="M585.5 35.5 L585.50 30.90 A4.6 4.6 0 0 1 589.48 33.20 Z" fill="#684412"/><path d="M585.5 35.5 L589.48 33.20 A4.6 4.6 0 0 1 589.48 37.80 Z" fill="#682424"/><path d="M585.5 35.5 L589.48 37.80 A4.6 4.6 0 0 1 585.50 40.10 Z" fill="#441f61"/><path d="M585.5 35.5 L585.50 40.10 A4.6 4.6 0 0 1 581.52 37.80 Z" fill="#1f386d"/><path d="M585.5 35.5 L581.52 37.80 A4.6 4.6 0 0 1 581.52 33.20 Z" fill="#1f5c38"/><path d="M585.5 35.5 L581.52 33.20 A4.6 4.6 0 0 1 585.50 30.90 Z" fill="#5c5c18"/>
<circle cx="589" cy="39.5" r="1.4" fill="#1f446d"/>
<path d="M600.5 35.5 L600.50 30.90 A4.6 4.6 0 0 1 604.48 33.20 Z" fill="#684412"/><path d="M600.5 35.5 L604.48 33.20 A4.6 4.6 0 0 1 604.48 37.80 Z" fill="#682424"/><path d="M600.5 35.5 L604.48 37.80 A4.6 4.6 0 0 1 600.50 40.10 Z" fill="#441f61"/><path d="M600.5 35.5 L600.50 40.10 A4.6 4.6 0 0 1 596.52 37.80 Z" fill="#1f386d"/><path d="M600.5 35.5 L596.52 37.80 A4.6 4.6 0 0 1 596.52 33.20 Z" fill="#1f5c38"/><path d="M600.5 35.5 L596.52 33.20 A4.6 4.6 0 0 1 600.50 30.90 Z" fill="#5c5c18"/>
<path d="M602.5 38l3 3M605.5 38l-3 3" stroke="#681818" stroke-width="1.2"/>
<text x="611" y="39.5" font-size="10" fill="#222222" stroke="#222222" stroke-width="0.3" font-weight="normal" text-anchor="start" font-family="Liberation Serif" font-style="italic">f</text>
<text x="614.6" y="39.5" font-size="8" fill="#222222" stroke="#222222" stroke-width="0.3" font-weight="normal" text-anchor="start" font-family="Liberation Serif" font-style="italic">x</text>
<path d="M630 32.3v7.4M626.3 36h7.4" stroke="#767676" stroke-width="1.8"/>
<path d="M640.2 33.3h5.8" stroke="#222222" stroke-width="0.9"/>
<path d="M640.8 35.5 h4.6 l-2.3 2.5 z" fill="#222222"/>
<text x="686" y="39" font-size="7.5" fill="#343434" stroke="#343434" stroke-width="0.3" font-weight="normal" text-anchor="start" textLength="30" lengthAdjust="spacingAndGlyphs" >LMU6.ipt</text>
<path d="M756.3 33.6l2.6 2.4-2.6 2.4z" fill="#222222"/>
<text x="765" y="39" font-size="7.5" fill="#222222" stroke="#222222" stroke-width="0.3" font-weight="normal" text-anchor="start" textLength="32" lengthAdjust="spacingAndGlyphs" >ヘルプおよ</text>
<rect x="219" y="46" width="32" height="12" fill="#945c0f"/>
<text x="222.5" y="54.6" font-size="7.5" fill="#b3a48c" stroke="#b3a48c" stroke-width="0.3" font-weight="normal" text-anchor="start" textLength="23" lengthAdjust="spacingAndGlyphs" >ファイル</text>
<rect x="253" y="45.6" width="39" height="12.6" fill="#686868"/>
<text x="258" y="54.6" font-size="7.5" fill="#262626" stroke="#262626" stroke-width="0.3" font-weight="normal" text-anchor="start" textLength="28" lengthAdjust="spacingAndGlyphs" >3D モデル</text>
<text x="298" y="54.6" font-size="7.5" fill="#262626" stroke="#262626" stroke-width="0.3" font-weight="normal" text-anchor="start" textLength="22" lengthAdjust="spacingAndGlyphs" >スケッチ</text>
<text x="333" y="54.6" font-size="7.5" fill="#262626" stroke="#262626" stroke-width="0.3" font-weight="normal" text-anchor="start" textLength="34" lengthAdjust="spacingAndGlyphs" >注記を作成</text>
<text x="380" y="54.6" font-size="7.5" fill="#262626" stroke="#262626" stroke-width="0.3" font-weight="normal" text-anchor="start" textLength="14.5" lengthAdjust="spacingAndGlyphs" >検査</text>
<text x="408" y="54.6" font-size="7.5" fill="#262626" stroke="#262626" stroke-width="0.3" font-weight="normal" text-anchor="start" textLength="16" lengthAdjust="spacingAndGlyphs" >ツール</text>
<text x="437" y="54.6" font-size="7.5" fill="#262626" stroke="#262626" stroke-width="0.3" font-weight="normal" text-anchor="start" textLength="14.5" lengthAdjust="spacingAndGlyphs" >管理</text>
<text x="464" y="54.6" font-size="7.5" fill="#262626" stroke="#262626" stroke-width="0.3" font-weight="normal" text-anchor="start" textLength="14.5" lengthAdjust="spacingAndGlyphs" >表示</text>
<text x="491" y="54.6" font-size="7.5" fill="#262626" stroke="#262626" stroke-width="0.3" font-weight="normal" text-anchor="start" textLength="14.5" lengthAdjust="spacingAndGlyphs" >環境</text>
<text x="518" y="54.6" font-size="7.5" fill="#262626" stroke="#262626" stroke-width="0.3" font-weight="normal" text-anchor="start" textLength="43" lengthAdjust="spacingAndGlyphs" >コラボレーション</text>
<text x="573" y="54.6" font-size="7.5" fill="#262626" stroke="#262626" stroke-width="0.3" font-weight="normal" text-anchor="start" textLength="34" lengthAdjust="spacingAndGlyphs" >Fusion 360</text>
<rect x="626.3" y="49.8" width="9" height="5.4" rx="1.4" fill="none" stroke="#222222" stroke-width="1"/>
<path d="M629.6 53.4l1.2-1.5 1.2 1.5z" fill="#222222"/>
<path d="M638.5 52.0 h3.0 l-1.5 1.7 z" fill="#222222"/>
<rect x="255.6" y="59" width="0.8" height="36" fill="#5e5e5e"/>
<rect x="293.6" y="59" width="0.8" height="36" fill="#5e5e5e"/>
<rect x="331.1" y="59" width="0.8" height="36" fill="#5e5e5e"/>
<rect x="369.6" y="59" width="0.8" height="36" fill="#5e5e5e"/>
<rect x="407.6" y="59" width="0.8" height="36" fill="#5e5e5e"/>
<rect x="445.1" y="59" width="0.8" height="36" fill="#5e5e5e"/>
<rect x="482.6" y="59" width="0.8" height="36" fill="#5e5e5e"/>
<rect x="520.6" y="59" width="0.8" height="36" fill="#5e5e5e"/>
<rect x="558.1" y="59" width="0.8" height="36" fill="#5e5e5e"/>
<rect x="595.6" y="59" width="0.8" height="36" fill="#5e5e5e"/>
<text x="227.5" y="91.3" font-size="7.5" fill="#222222" stroke="#222222" stroke-width="0.3" font-weight="normal" text-anchor="start" textLength="21" lengthAdjust="spacingAndGlyphs" >スケッチ</text>
<text x="267.75" y="91.3" font-size="7.5" fill="#222222" stroke="#222222" stroke-width="0.3" font-weight="normal" text-anchor="start" textLength="14.5" lengthAdjust="spacingAndGlyphs" >作成</text>
<text x="305.75" y="91.3" font-size="7.5" fill="#222222" stroke="#222222" stroke-width="0.3" font-weight="normal" text-anchor="start" textLength="14.5" lengthAdjust="spacingAndGlyphs" >修正</text>
<text x="343.75" y="91.3" font-size="7.5" fill="#222222" stroke="#222222" stroke-width="0.3" font-weight="normal" text-anchor="start" textLength="14.5" lengthAdjust="spacingAndGlyphs" >調査</text>
<text x="372.0" y="91.3" font-size="7.5" fill="#222222" stroke="#222222" stroke-width="0.3" font-weight="normal" text-anchor="start" textLength="34" lengthAdjust="spacingAndGlyphs" >作業フィー...</text>
<text x="414.5" y="91.3" font-size="7.5" fill="#222222" stroke="#222222" stroke-width="0.3" font-weight="normal" text-anchor="start" textLength="23" lengthAdjust="spacingAndGlyphs" >パターン</text>
<text x="446.5" y="91.3" font-size="7.5" fill="#222222" stroke="#222222" stroke-width="0.3" font-weight="normal" text-anchor="start" textLength="35" lengthAdjust="spacingAndGlyphs" >フリーフォー...</text>
<text x="489.0" y="91.3" font-size="7.5" fill="#222222" stroke="#222222" stroke-width="0.3" font-weight="normal" text-anchor="start" textLength="26" lengthAdjust="spacingAndGlyphs" >サーフェス</text>
<text x="524.0" y="91.3" font-size="7.5" fill="#222222" stroke="#222222" stroke-width="0.3" font-weight="normal" text-anchor="start" textLength="32" lengthAdjust="spacingAndGlyphs" >シミュレー...</text>
<text x="569.75" y="91.3" font-size="7.5" fill="#222222" stroke="#222222" stroke-width="0.3" font-weight="normal" text-anchor="start" textLength="14.5" lengthAdjust="spacingAndGlyphs" >変換</text>
<rect x="229" y="63.5" width="16.5" height="16.5" fill="none" stroke="#222222" stroke-width="0.7" stroke-dasharray="2 1"/>
<path d="M233 67.6h9.5v1c0 5-3 9-9.5 9.6z" fill="none" stroke="#222222" stroke-width="0.9"/>
<rect x="228.2" y="62.7" width="1.6" height="1.6" fill="#222222"/>
<rect x="244.7" y="62.7" width="1.6" height="1.6" fill="#222222"/>
<rect x="228.2" y="79.2" width="1.6" height="1.6" fill="#222222"/>
<rect x="232.2" y="66.8" width="1.6" height="1.6" fill="#222222"/>
<rect x="241.7" y="66.8" width="1.6" height="1.6" fill="#222222"/>
<rect x="232.2" y="77.4" width="1.6" height="1.6" fill="#222222"/>
<path d="M243.6 74v8.4M239.4 78.2h8.4" stroke="#175326" stroke-width="2.4"/>
<path d="M266.5 66l3-3h11.2l-3 3z" fill="#2f6183"/>
<path d="M277.7 66l3-3v13l-3 3z" fill="#1f4865"/>
<rect x="266.5" y="66" width="11.2" height="13" fill="#265475"/>
<path d="M266.5 79.3v2.2h11.2l3-3v-2" fill="#8a8a8a" stroke="#222222" stroke-width="0.7"/>
<path d="M283.2 65v13" stroke="#222222" stroke-width="0.9"/><circle cx="283.2" cy="64.5" r="1.2" fill="#222222"/>
<path d="M303.5 67.5l4.5-4.5h14.5v13.5l-4.5 4.5h-14.5z" fill="#858585" stroke="#222222" stroke-width="0.9" stroke-linejoin="round"/>
<path d="M303.5 67.5h14.5v13.5M318 67.5l4.5-4.5" fill="none" stroke="#222222" stroke-width="0.8"/>
<circle cx="310.8" cy="74.6" r="5.2" fill="#7a7a7a" stroke="#444" stroke-width="1"/>
<path d="M309 70.4a4.6 4.6 0 1 0 6 6.6a5.5 5.5 0 0 1 -6 -6.6z" fill="#235274"/>
<path d="M341.5 76l6.5-5.5h11.5l-6.5 5.5zM341.5 76v4l0 2h11.5v-6M353 82l6.5-5.5v-6" fill="none" stroke="#222222" stroke-width="0.8"/>
<path d="M343.5 74.5l4.5-3.5h8l-4.5 3.5zM343.500 74.5v5h8v-5zM351.5 79.5l4.5-3.5v-5" fill="#685824" stroke="#46390f" stroke-width="0.5"/>
<path d="M355.8 62.4 L356.7 65.0 L359.2 63.8 L358.0 66.3 L360.6 67.2 L358.0 68.1 L359.2 70.6 L356.7 69.4 L355.8 72.0 L354.9 69.4 L352.4 70.6 L353.6 68.1 L351.0 67.2 L353.6 66.3 L352.4 63.8 L354.9 65.0 Z" fill="#755007"/>
<rect x="383.8" y="63" width="14.5" height="14.2" rx="1" fill="none" stroke="#3a3a3a" stroke-width="0.9"/>
<rect x="379" y="67.5" width="14.5" height="14" fill="#6c4427"/>
<rect x="383.8" y="67.5" width="9.7" height="9.7" fill="#685040" stroke="#4a4a4a" stroke-width="0.6"/>
<circle cx="421.3" cy="68" r="2.2" fill="none" stroke="#222222" stroke-width="0.9"/>
<path d="M423.5 68h4M421.3 70.2v4.2M424 77h4" stroke="#4a4a4a" stroke-width="0.9"/>
<rect x="427.8" y="65.6" width="4.8" height="4.8" fill="#235375"/><rect x="419" y="74.6" width="4.8" height="4.8" fill="#235375"/><rect x="427.8" y="74.6" width="4.8" height="4.8" fill="#235375"/>
<path d="M454.5 68.5c0-2 1.5-3 3-3.5l3.5-2.300h10c2 0 3 1 3 3v10.300c0 1.500-.6 2.200-1.500 3l-3.500 2.500c-.8.500-1.500.800-2.500.800h-9c-2 0-3-1-3-3z" fill="#482f68" stroke="#2d1c48" stroke-width="0.7"/>
<path d="M454.5 68.500c0-2 1.500-3 3-3.500l3.500-2.300h10c2 0 3 1 3 3l-4.500 3.300h-13z" fill="#5d447d"/>
<path d="M461 68.500v13.500M454.500 75h14.500M468.800 68.500v13.500M468.800 68.500l5-3.500M461 68.500l5-5.500M471.500 80v-13" fill="none" stroke="#73618e" stroke-width="0.6"/>
<path d="M492 63.200h20v18.800h-7c-2.500 0-3.500-1-3.500-3.500v-4.500h-9.500z" fill="#6c4427"/>
<path d="M530 69l5-5.500h11.500v13l-5 5h-11.500z" fill="#1f5c68"/>
<path d="M541.500 69l5-5.500v13l-5 5z" fill="#174c55"/>
<path d="M530 69l5-5.500h11.500l-5 5.500z" fill="#2c6c75"/>
<path d="M530 81.500v-12.500c6 0 11.500 5 11.500 12.500z" fill="#5c6824"/>
<path d="M530 81.500v-9.500c4.500 0 8.500 4 8.500 9.500z" fill="#755c18"/>
<path d="M530 81.500v-6.500c3 0 5.500 3 5.500 6.500z" fill="#753830"/>
<path d="M530 69l5-5.500c4 0 8 3 9.500 6.500l-3 3.500c-1.500-3-6.500-4.500-11.500-4.500z" fill="#50683c" opacity="0.7"/>
<circle cx="542.500" cy="79.500" r="2.800" fill="#164871"/><path d="M544 79.500h3.500M546.300 77.300l2.700 2.200-2.700 2.200z" fill="#164871" stroke="#164871" stroke-width="1"/>
<path d="M568 71l5.500-8c2 0 3.500 3.500 6 4.500c2 .8 4 .3 5.500-.5l-5 6.500c-2 .8-4 .3-6-1.500c-1.500-1.300-3.500-2-6-1z" fill="#2c5b7d"/>
<path d="M568 71l5.500-8 1 2.500-5.500 8z" fill="#1f4461"/>
<path d="M568 71.500v7l6.500-8.500" fill="#757575" stroke="#2f2f2f" stroke-width="0.8"/>
<circle cx="579.800" cy="78.500" r="2.800" fill="#164871"/><path d="M581.500 78.500h3.500M583.800 76.300l2.700 2.200-2.700 2.200z" fill="#164871" stroke="#164871" stroke-width="1"/>
<circle cx="615" cy="72.300" r="8.800" fill="none" stroke="#2c2c2c" stroke-width="0.9"/>
<path d="M611 70.300h8l-4 5z" fill="#2c2c2c"/>
<rect x="218" y="97" width="37.500" height="14.500" fill="#696969"/>
<rect x="255.500" y="97" width="56.200" height="14.500" fill="#5d5d5d"/>
<text x="220" y="107.4" font-size="8" fill="#1e1e1e" stroke="#1e1e1e" stroke-width="0.3" font-weight="normal" text-anchor="start" textLength="21.5" lengthAdjust="spacingAndGlyphs" >モデル</text>
<path d="M245.500 102l5 5M250.500 102l-5 5" stroke="#1e1e1e" stroke-width="0.9"/>
<path d="M262.500 101.500v6M259.500 104.500h6" stroke="#1e1e1e" stroke-width="0.9"/>
<circle cx="287.500" cy="103.800" r="2.900" fill="none" stroke="#1e1e1e" stroke-width="0.9"/><path d="M289.600 106l2.600 2.700" stroke="#1e1e1e" stroke-width="1"/>
<path d="M299.500 101.400h8M299.500 104.500h8M299.500 107.600h8" stroke="#1e1e1e" stroke-width="0.9"/>
<path d="M220.0 114.8l2-2h7.500v7l-2 2h-7.500z" fill="#235274"/><path d="M220.0 114.8l2-2h7.500l-2 2z" fill="#386889"/><path d="M227.5 114.8l2-2v7l-2 2z" fill="#1c4461"/>
<text x="231" y="121" font-size="8" fill="#1e1e1e" stroke="#1e1e1e" stroke-width="0.3" font-weight="normal" text-anchor="start" textLength="27" lengthAdjust="spacingAndGlyphs" >LMU6.ipt</text>
<path d="M223.500 124v80.500" stroke="#5a5a5a" stroke-width="0.6" stroke-dasharray="1 1"/>
<path d="M221.0 130.0h5M223.5 127.5v5" stroke="#242424" stroke-width="1.15"/>
<path d="M229.0 126.1h3.600l1 1.300h5.200v7.300h-9.800z" fill="#7b6a38"/><path d="M229.0 129.0h9.800v5.700h-9.800z" fill="#83723c"/>
<text x="241" y="132.9" font-size="8" fill="#1e1e1e" stroke="#1e1e1e" stroke-width="0.3" font-weight="normal" text-anchor="start" textLength="67" lengthAdjust="spacingAndGlyphs" >モデル状態: [プライマリ]</text>
<path d="M221.0 142.5h5M223.5 140.0v5" stroke="#242424" stroke-width="1.15"/>
<path d="M229.500 137.0h7l2 2v8.500h-9z" fill="#7a7a7a" stroke="#333" stroke-width="0.8"/>
<path d="M231.500 143.0l2-1.800h6.500l-2 1.800zM231.500 143.0v3.500h6.500v-3.500zM238 143.0l2-1.800v3.500l-2 1.800z" fill="#235274"/>
<text x="241" y="145.4" font-size="8" fill="#1e1e1e" stroke="#1e1e1e" stroke-width="0.3" font-weight="normal" text-anchor="start" textLength="42" lengthAdjust="spacingAndGlyphs" >サード パーティ</text>
<path d="M221.0 155.0h5M223.5 152.5v5" stroke="#242424" stroke-width="1.15"/>
<path d="M229.0 151.1h3.600l1 1.300h5.200v7.300h-9.800z" fill="#7b6a38"/><path d="M229.0 154.0h9.800v5.700h-9.800z" fill="#83723c"/>
<rect x="233" y="153.8" width="4" height="4" rx="0.800" fill="#235274"/>
<text x="241" y="157.9" font-size="8" fill="#1e1e1e" stroke="#1e1e1e" stroke-width="0.3" font-weight="normal" text-anchor="start" textLength="47" lengthAdjust="spacingAndGlyphs" >ソリッド ボディ(1)</text>
<path d="M221.0 167.5h5M223.5 165.0v5" stroke="#242424" stroke-width="1.15"/>
<path d="M230.500 162.0v10.500M230.500 166.0h3M230.500 170.5h3" stroke="#333" stroke-width="0.8" fill="none"/>
<rect x="229.200" y="161.0" width="2.600" height="2.600" fill="#235274"/><rect x="234" y="164.5" width="3" height="3" fill="#235274"/><rect x="234" y="169.0" width="3" height="3" fill="#235274"/>
<path d="M238 166.0h2M238 170.5h2" stroke="#333" stroke-width="0.8"/>
<text x="241" y="170.4" font-size="8" fill="#1e1e1e" stroke="#1e1e1e" stroke-width="0.3" font-weight="normal" text-anchor="start" textLength="51" lengthAdjust="spacingAndGlyphs" >ビュー: [プライマリ]</text>
<path d="M221.0 180.0h5M223.5 177.5v5" stroke="#242424" stroke-width="1.15"/>
<path d="M229.0 176.1h3.600l1 1.300h5.200v7.300h-9.800z" fill="#7b6a38"/><path d="M229.0 179.0h9.800v5.700h-9.800z" fill="#83723c"/>
<text x="241" y="182.9" font-size="8" fill="#1e1e1e" stroke="#1e1e1e" stroke-width="0.3" font-weight="normal" text-anchor="start" textLength="19" lengthAdjust="spacingAndGlyphs" >Origin</text>
<path d="M223.500 192.3h5" stroke="#5a5a5a" stroke-width="0.6" stroke-dasharray="1 1"/>
<path d="M229.5 188.8l2-2h7.500v7l-2 2h-7.500z" fill="#235274"/><path d="M229.5 188.8l2-2h7.500l-2 2z" fill="#386889"/><path d="M237.0 188.8l2-2v7l-2 2z" fill="#1c4461"/>
<text x="241" y="195.20000000000002" font-size="8" fill="#1e1e1e" stroke="#1e1e1e" stroke-width="0.3" font-weight="normal" text-anchor="start" textLength="19.5" lengthAdjust="spacingAndGlyphs" >Base1</text>
<path d="M223.500 204.5h5" stroke="#5a5a5a" stroke-width="0.6" stroke-dasharray="1 1"/>
<circle cx="234.300" cy="204.5" r="4.600" fill="#751919"/>
<path d="M232.300 202.5l4 4M236.300 202.5l-4 4" stroke="#c9b0b0" stroke-width="1.300"/>
<text x="241" y="207.4" font-size="8" fill="#1e1e1e" stroke="#1e1e1e" stroke-width="0.3" font-weight="normal" text-anchor="start" textLength="39" lengthAdjust="spacingAndGlyphs" >パーツの終端</text>
<path d="M344 417.500v-13" stroke="#175c1f" stroke-width="1"/><path d="M340.800 407.500l3.200-6 3.200 6z" fill="#114f17"/>
<path d="M344 417.500l11 5" stroke="#681f1f" stroke-width="1"/><path d="M351.300 417.800l7.200 6.200-8.800.200z" fill="#681717"/>
<path d="M344 417.500l-10.500 5.500" stroke="#1c1c68" stroke-width="1"/><path d="M337.800 418l-7.500 6 8.800.800z" fill="#0f0f61"/>
<text x="341" y="400.5" font-size="7.5" fill="#17681f" stroke="#17681f" stroke-width="0.3" font-weight="normal" text-anchor="start" textLength="5.5" lengthAdjust="spacingAndGlyphs" >Y</text>
<text x="357.5" y="428.8" font-size="7.5" fill="#791f1f" stroke="#791f1f" stroke-width="0.3" font-weight="normal" text-anchor="start" textLength="5.5" lengthAdjust="spacingAndGlyphs" >X</text>
<text x="325.5" y="429.2" font-size="7.5" fill="#1f1f79" stroke="#1f1f79" stroke-width="0.3" font-weight="normal" text-anchor="start" textLength="5.5" lengthAdjust="spacingAndGlyphs" >Z</text>
<path d="M315.600 457.600l4.500-4.200 4.500 4.200M316.900 456.900v4.700h6.400v-4.700M319.100 461.600v-2.600h2v2.600" fill="none" stroke="#2c2c2c" stroke-width="0.9"/>
<text x="326.5" y="460.5" font-size="7.5" fill="#303030" stroke="#303030" stroke-width="0.3" font-weight="normal" text-anchor="start" textLength="17" lengthAdjust="spacingAndGlyphs" >ホーム</text>
<text x="353" y="460.5" font-size="7.5" fill="#303030" stroke="#303030" stroke-width="0.3" font-weight="normal" text-anchor="start" textLength="16.5" lengthAdjust="spacingAndGlyphs" >Part1</text>
<path d="M374.200 454.800l4.600 4.600M378.800 454.800l-4.600 4.600" stroke="#333" stroke-width="0.8"/>
<rect x="385.500" y="449.500" width="48.500" height="14.500" fill="#626262"/>
<rect x="385.500" y="462.600" width="48.500" height="1.400" fill="#1f4c6c"/>
<text x="390" y="459.5" font-size="7.5" fill="#1f4868" stroke="#1f4868" stroke-width="0.3" font-weight="normal" text-anchor="start" textLength="30" lengthAdjust="spacingAndGlyphs" >LMU6.ipt</text>
<path d="M424.200 453.600l4.600 4.600M428.800 453.600l-4.600 4.600" stroke="#333" stroke-width="0.8"/>
<text x="219" y="475.3" font-size="7.5" fill="#2c2c2c" stroke="#2c2c2c" stroke-width="0.3" font-weight="normal" text-anchor="start" textLength="29" lengthAdjust="spacingAndGlyphs" >準備完了</text>

<!-- right panel -->
<rect x="788" y="29" width="275" height="450" fill="#222224"/>
<rect x="788" y="29" width="275" height="18.5" fill="#121214"/>
<rect x="788" y="136" width="275" height="246" fill="url(#rpg)"/>
<rect x="926" y="136" width="137" height="23" fill="#3b4043"/>

<path d="M791.600 42.600l7-7.600 5 3.600-4.600 5.200z" fill="#6f6f6f"/>
<path d="M791.600 42.600l6.600-2.800 5.400-1.200M798.200 39.800l.8 4M798.600 35l-.4 4.800" fill="none" stroke="#3f3f3f" stroke-width="0.5"/>
<text x="810.5" y="42" font-size="7.5" fill="#616161" stroke="#616161" stroke-width="0.3" font-weight="normal" text-anchor="start" textLength="27.5" lengthAdjust="spacingAndGlyphs" >設計画面</text>
<rect x="975" y="31" width="17.500" height="14.700" rx="1" fill="#6b6b6b"/>
<rect x="997.300" y="31" width="18.700" height="14.700" rx="1" fill="#6b6b6b"/>
<rect x="1039.400" y="31" width="18.700" height="14.700" rx="1" fill="#6b6b6b"/>
<path d="M981.800 33.800h4l-.5 1.200h-.5l.4 3 1.700 1.500v.8h-6.200v-.8l1.700-1.500.4-3h-.5zM983.400 40.300h.8v2.400h-.8z" fill="#8a6a0a"/>
<rect x="1003.500" y="40.300" width="4.500" height="1" fill="#333"/>
<path d="M1045.800 35.200l6 6M1051.800 35.200l-6 6" stroke="#333" stroke-width="0.9"/>
<rect x="788" y="75.500" width="275" height="1" fill="#1a1a1c"/>
<rect x="794.400" y="55.800" width="62" height="13.200" fill="#6e6e6e"/>
<text x="810.5" y="65.3" font-size="7.5" fill="#3f3f3f" stroke="#3f3f3f" stroke-width="0.3" font-weight="normal" text-anchor="start" textLength="29" lengthAdjust="spacingAndGlyphs" >検索画面</text>
<rect x="862" y="54.300" width="143.500" height="16.200" fill="#6b6b6b"/>
<rect x="986.500" y="55.500" width="1" height="13.800" fill="#5c5c5c"/>
<text x="868" y="65.5" font-size="7.5" fill="#4e4e4e" stroke="#4e4e4e" stroke-width="0.3" font-weight="normal" text-anchor="start" textLength="33.5" lengthAdjust="spacingAndGlyphs" >型番を入力</text>
<circle cx="995.200" cy="61.300" r="2.900" fill="none" stroke="#1e1e1e" stroke-width="1.100"/><path d="M997.300 63.500l2.800 2.800" stroke="#1e1e1e" stroke-width="1.300"/>
<rect x="1017.800" y="54.300" width="18.500" height="16" fill="#6b6b6b"/>
<path d="M1023.300 62.300a4.200 4.200 0 1 1 1.500 3.300" fill="none" stroke="#1e1e1e" stroke-width="1.100"/><path d="M1021.300 61.300h4l-2 2.500z" fill="#1e1e1e"/><path d="M1027.500 60v2.600l1.800 1.100" fill="none" stroke="#1e1e1e" stroke-width="0.900"/>
<path d="M1045.200 57.800h8.600c.5 0 .8.300.8.800v5.200c0 .5-.3.800-.8.800h-7.200l-2.200 2v-8c0-.5.300-.8.800-.8z" fill="#6b6b6b"/>
<rect x="1046.500" y="60.600" width="6" height="1" fill="#3a3a3a"/>
<rect x="794" y="86.400" width="130.500" height="25" rx="12.500" fill="#6d5802" stroke="#161a2c" stroke-width="1"/>
<path d="M833.24 106.42 L825.60 102.56 L825.60 95.16 L832.99 91.30 L840.47 95.33 L832.82 98.94 L832.82 103.98" fill="none" stroke="#0c0a03" stroke-width="1.7" stroke-linejoin="miter" stroke-linecap="butt"/><path d="M836.18 106.17 L842.90 100.79" stroke="#0c0a03" stroke-width="2.125" stroke-linecap="round"/>
<text x="848.5" y="103.5" font-size="9" fill="#120f03" stroke="#120f03" font-weight="bold" text-anchor="start" textLength="42.5" lengthAdjust="spacingAndGlyphs" stroke-width="0.3">モデル編集</text>
<rect x="1039" y="88.500" width="15.500" height="18.500" rx="2" fill="none" stroke="#696969" stroke-width="1.300"/>
<path d="M1042 93h9.500M1042 96.500h9.500M1042 100h6" stroke="#696969" stroke-width="1.400"/>
<circle cx="1052.500" cy="104.300" r="5.200" fill="#222224" stroke="#696969" stroke-width="1.300"/>
<path d="M1050.800 101.800l1.700 2.300 1.700-2.300M1052.500 104.100v3M1050.800 104.800h3.400M1050.800 106h3.400" stroke="#696969" stroke-width="0.800" fill="none"/>
<text x="794.5" y="126.5" font-size="7.5" fill="#7a7a7a" stroke="#7a7a7a" stroke-width="0.3" font-weight="normal" text-anchor="start" textLength="21" lengthAdjust="spacingAndGlyphs" >商品名</text>
<rect x="823.800" y="141.500" width="10.500" height="12.500" rx="1.300" fill="#121212"/><rect x="826.800" y="140.300" width="4.500" height="2.500" rx="1" fill="#121212"/>
<path d="M826 146h6M826 148.500h6M826 151h4" stroke="#6a6a6a" stroke-width="0.900"/>
<text x="840" y="151.3" font-size="9" fill="#1c1c1c" stroke="#1c1c1c" stroke-width="0.3" font-weight="normal" text-anchor="start" textLength="51.5" lengthAdjust="spacingAndGlyphs" >仕様 / 追加工</text>
<path d="M964.500 143h8.300v7.300h-8.300zM972.800 145.300h3l2 2.500v2.500h-5z" fill="#626668"/><circle cx="967.300" cy="151" r="1.500" fill="#626668" stroke="#3b4043" stroke-width="0.6"/><circle cx="975" cy="151" r="1.500" fill="#626668" stroke="#3b4043" stroke-width="0.6"/>
<text x="981.5" y="151.3" font-size="9" fill="#64686a" stroke="#64686a" stroke-width="0.3" font-weight="normal" text-anchor="start" textLength="43" lengthAdjust="spacingAndGlyphs" >価格 / 納期</text>
<rect x="1061.500" y="159" width="1.500" height="223" fill="#3e3e3e" opacity="0.6"/>
<text x="801" y="400.3" font-size="7.5" fill="#686868" stroke="#686868" stroke-width="0.3" font-weight="normal" text-anchor="start" textLength="21" lengthAdjust="spacingAndGlyphs" >型番：</text>
<rect x="801" y="408.800" width="252" height="0.900" fill="#3f3f41"/>
<text x="801" y="425.3" font-size="7.5" fill="#686868" stroke="#686868" stroke-width="0.3" font-weight="normal" text-anchor="start" textLength="21" lengthAdjust="spacingAndGlyphs" >単価：</text>
<text x="851.5" y="425.3" font-size="7.5" fill="#6a6a6a" stroke="#6a6a6a" stroke-width="0.3" font-weight="normal" text-anchor="start" >-</text>
<text x="920" y="425.3" font-size="7.5" fill="#686868" stroke="#686868" stroke-width="0.3" font-weight="normal" text-anchor="start" textLength="28" lengthAdjust="spacingAndGlyphs" >出荷日：</text>
<text x="965.5" y="425.3" font-size="7.5" fill="#6a6a6a" stroke="#6a6a6a" stroke-width="0.3" font-weight="normal" text-anchor="start" >-</text>
<rect x="811" y="444.500" width="229.500" height="24.500" rx="12.250" fill="#696969"/>
<path d="M899.700 453.600a4.200 4.200 0 0 1 6.600-.8M907.300 458.800a4.200 4.200 0 0 1 -6.600.8" fill="none" stroke="#161616" stroke-width="1.300"/><path d="M904.800 454.300h3.300v-3.300zM902.200 458.100h-3.300v3.300z" fill="#161616"/>
<text x="911" y="460.3" font-size="9.5" fill="#474747" stroke="#474747" stroke-width="0.3" font-weight="normal" text-anchor="start" textLength="43.5" lengthAdjust="spacingAndGlyphs" >モデル生成</text>
<rect x="1054" y="475.5" width="1.400" height="2" fill="#4e4e50"/>
<rect x="1056.1" y="473.5" width="1.400" height="4" fill="#4e4e50"/>
<rect x="1058.2" y="471.5" width="1.400" height="6" fill="#4e4e50"/>
<rect x="1060.3" y="469.5" width="1.400" height="8" fill="#4e4e50"/>
<g>
<rect x="801.800" y="223.800" width="247.200" height="128" fill="#1f2126"/>
<rect x="801.800" y="223.800" width="176.200" height="20" fill="#212123"/>
<rect x="801.800" y="223.800" width="176.200" height="3.500" fill="#1a1a1c"/>
<rect x="802" y="228.300" width="8" height="2" fill="#5e3a08"/>
<rect x="810" y="231.500" width="165" height="9" fill="#262628"/>
<rect x="806.5" y="232.200" width="2.600" height="2.600" fill="#4a3214"/>
<rect x="816" y="232.200" width="2.600" height="2.600" fill="#2a2a2a"/>
<rect x="834" y="232.200" width="2.600" height="2.600" fill="#26323f"/>
<rect x="853" y="232.200" width="2.600" height="2.600" fill="#1f2e40"/>
<rect x="862" y="232.200" width="2.600" height="2.600" fill="#3a2626"/>
<rect x="889" y="232.200" width="2.600" height="2.600" fill="#30302a"/>
<rect x="931.5" y="232.200" width="2.600" height="2.600" fill="#22364a"/>
<rect x="944" y="232.200" width="2.600" height="2.600" fill="#2c2c2c"/>
<rect x="955" y="232.200" width="2.600" height="2.600" fill="#2c2c2c"/>
<rect x="961" y="232.200" width="2.600" height="2.600" fill="#26303a"/>
<rect x="814" y="236.800" width="10" height="1.200" fill="#303032"/>
<rect x="822" y="236.800" width="14" height="1.200" fill="#303032"/>
<rect x="838" y="236.800" width="12" height="1.200" fill="#303032"/>
<rect x="858" y="236.800" width="16" height="1.200" fill="#303032"/>
<rect x="866" y="236.800" width="20" height="1.200" fill="#303032"/>
<rect x="890" y="236.800" width="18" height="1.200" fill="#303032"/>
<rect x="929" y="236.800" width="8" height="1.200" fill="#303032"/>
<rect x="942" y="236.800" width="7" height="1.200" fill="#303032"/>
<rect x="953" y="236.800" width="7" height="1.200" fill="#303032"/>
<rect x="963" y="236.800" width="12" height="1.200" fill="#303032"/>
<rect x="801.800" y="243.800" width="33.200" height="89.200" fill="#29292b"/>
<rect x="806" y="248" width="12" height="1.200" fill="#37372f"/>
<rect x="808" y="251.5" width="17" height="1.200" fill="#37372f"/>
<rect x="806" y="255" width="13" height="1.200" fill="#37372f"/>
<rect x="808" y="258.5" width="18" height="1.200" fill="#37372f"/>
<rect x="806" y="262" width="14" height="1.200" fill="#37372f"/>
<rect x="808" y="265.5" width="19" height="1.200" fill="#37372f"/>
<rect x="806" y="269" width="15" height="1.200" fill="#37372f"/>
<rect x="808" y="272.5" width="20" height="1.200" fill="#37372f"/>
<path d="M880 292l30 18c6 3 12-2 10-8l-24-16z" fill="#26282d"/>
<rect x="978" y="223.800" width="71" height="24.400" fill="#1c1c1e"/>
<rect x="978" y="223.800" width="71" height="4.400" fill="#0e0e10"/>
<rect x="1026" y="224.500" width="4.500" height="3.200" fill="#5a5a48"/><rect x="1032.500" y="224.500" width="4.500" height="3.200" fill="#4c4c4c"/><rect x="1043.500" y="224.500" width="4.500" height="3.200" fill="#4c4c4c"/>
<rect x="980" y="229.800" width="15.500" height="3.200" fill="#525252"/><rect x="997.500" y="229.600" width="37.500" height="3.600" fill="#525252"/><rect x="1038" y="229.400" width="5" height="4" fill="#525252"/><rect x="1045" y="230.200" width="2.600" height="2" fill="#6a6a6a"/>
<rect x="979.600" y="236.500" width="34.400" height="6" rx="3" fill="#6b5604"/>
<rect x="987.500" y="238.300" width="3.200" height="2.600" fill="#2a2203"/><rect x="993" y="238.800" width="11" height="1.600" fill="#2a2203"/>
<rect x="1027.500" y="237" width="4.500" height="5.500" fill="#7a7a7a"/><rect x="1027.500" y="239.800" width="4.500" height="2" fill="#7a1f1f"/>
<rect x="1043" y="237.500" width="4.500" height="5" rx="1" fill="none" stroke="#5a5a5a" stroke-width="0.8"/>
<rect x="980" y="244.800" width="26" height="1.400" fill="#444446"/>
<rect x="978" y="248.200" width="71" height="85" fill="#565656"/>
<rect x="978" y="248.200" width="36" height="4.600" fill="#616161"/><rect x="1014" y="248.200" width="35" height="4.600" fill="#3a3f42"/>
<rect x="987" y="249.400" width="2.600" height="2.400" fill="#1a1a1a"/><rect x="991.500" y="249.900" width="13" height="1.400" fill="#3e3e3e"/><rect x="1024" y="249.900" width="16" height="1.400" fill="#5a5e60"/>
<rect x="1000" y="255" width="32" height="3.400" fill="#646464"/><rect x="981" y="256" width="5" height="1.300" fill="#474747"/><rect x="1001.500" y="256" width="9" height="1.300" fill="#454545"/>
<rect x="1000" y="260.5" width="32" height="3.400" fill="#646464"/><rect x="981" y="261.5" width="5" height="1.300" fill="#474747"/><rect x="1001.500" y="261.5" width="9" height="1.300" fill="#454545"/>
<rect x="1000" y="266" width="32" height="3.400" fill="#646464"/><rect x="981" y="267" width="5" height="1.300" fill="#474747"/><rect x="1001.500" y="267" width="9" height="1.300" fill="#454545"/>
<rect x="1000" y="271.5" width="32" height="3.400" fill="#646464"/><rect x="981" y="272.5" width="5" height="1.300" fill="#474747"/><rect x="1001.500" y="272.5" width="9" height="1.300" fill="#454545"/>
<rect x="980.500" y="277.400" width="66" height="0.700" fill="#4c4c4c"/>
<rect x="981" y="279.800" width="1.600" height="1.600" fill="#7a6210"/><rect x="983.500" y="280" width="7" height="1.300" fill="#444"/>
<rect x="981.500" y="284.700" width="11" height="21" fill="#5e5e5e"/><rect x="994.400" y="284.700" width="49" height="21" fill="#6b6b6b"/>
<circle cx="987.800" cy="294.300" r="1.700" fill="none" stroke="#222" stroke-width="0.9"/><path d="M989 295.600l1.700 1.700" stroke="#222" stroke-width="0.9"/>
<path d="M1009 289h16l3-1.500M1008 293h20M1009 297h8M1009 300h12M1009 303h12" stroke="#585858" stroke-width="0.8" stroke-dasharray="1.500 1" fill="none"/>
<rect x="1000" y="308.300" width="14" height="3.200" fill="#666"/><rect x="1000" y="313.300" width="14" height="3.200" fill="#666"/><rect x="981" y="309.500" width="5" height="1.200" fill="#474747"/><rect x="1017" y="309.500" width="3" height="1.200" fill="#474747"/><rect x="1017" y="314.300" width="3" height="1.200" fill="#474747"/><rect x="1023" y="314.300" width="17" height="1.200" fill="#4a4a4a"/>
<rect x="980.500" y="318.600" width="64" height="0.700" fill="#4c4c4c"/>
<rect x="981" y="322" width="1.600" height="1.600" fill="#7a6210"/><rect x="983.500" y="322.200" width="16" height="1.300" fill="#444"/>
<rect x="981.500" y="327.300" width="62" height="6" fill="#646464"/>
<rect x="1046.300" y="252.800" width="2.700" height="80" fill="#4b4b4b"/><rect x="1046.800" y="309" width="1.700" height="20" fill="#626262"/>
<text x="820.5" y="258.3" font-size="8.8" fill="#7c7c7c" stroke="#7c7c7c" stroke-width="0.55" font-weight="bold" text-anchor="start" textLength="86" lengthAdjust="spacingAndGlyphs" >サイズ・仕様変更は</text>
<path d="M917 264l61-23-41.500 23z" fill="#7d7d7d"/>
<rect x="806" y="262.500" width="152" height="30.300" rx="15.150" fill="#7d7d7d"/>
<rect x="808.800" y="265.300" width="146.400" height="24.700" rx="12.350" fill="#735c03"/>
<path d="M842.60 286.40 L833.50 281.80 L833.50 273.00 L842.30 268.40 L851.20 273.20 L842.10 277.50 L842.10 283.50" fill="none" stroke="#0e0c04" stroke-width="2.1" stroke-linejoin="miter" stroke-linecap="butt"/><path d="M846.10 286.10 L854.10 279.70" stroke="#0e0c04" stroke-width="2.625" stroke-linecap="round"/>
<text x="860.5" y="283.2" font-size="12.8" fill="#0d0b03" stroke="#0d0b03" font-weight="bold" text-anchor="start" textLength="69.5" lengthAdjust="spacingAndGlyphs" stroke-width="0.45">モデル編集</text>
<text x="860" y="314.6" font-size="13.6" fill="#6c6c6c" stroke="#6c6c6c" stroke-width="0.8" font-weight="bold" text-anchor="start" textLength="59.5" lengthAdjust="spacingAndGlyphs" >クリック</text>
<path d="M936.300 281.500c0-3.600 5.600-3.600 5.600 0v10.500c.6-2 4.700-1.700 4.700.6v1.500c.7-1.700 4.500-1.400 4.500.8v1.500c.800-1.500 4.300-1.200 4.300 1v8.500c0 3.500-2.500 5.500-2.500 9.600h-13.500c-.5-3-2.500-5-5-8.500l-5.600-7.800c-1.400-2 1-4.300 3-2.800l4.500 3.800z" fill="#7b7b7b" stroke="#101012" stroke-width="1.700" stroke-linejoin="round"/>
<path d="M941.900 292v5.500M946.600 293.500v4.500M951.100 295v3.500" stroke="#101012" stroke-width="1.300"/>
<rect x="801.800" y="332.300" width="247.200" height="19.500" fill="#050506"/>
<rect x="982" y="347.500" width="60" height="2.500" rx="1.250" fill="#1a1404"/>
<text x="815.5" y="346.3" font-size="10.6" fill="#6c6c6c" stroke="#6c6c6c" stroke-width="0.55" font-weight="bold" text-anchor="start" textLength="219.5" lengthAdjust="spacingAndGlyphs" >インポートしたモデルは、何度でも編集可能</text>
</g>
</g></g>
</svg>
</body></html>
